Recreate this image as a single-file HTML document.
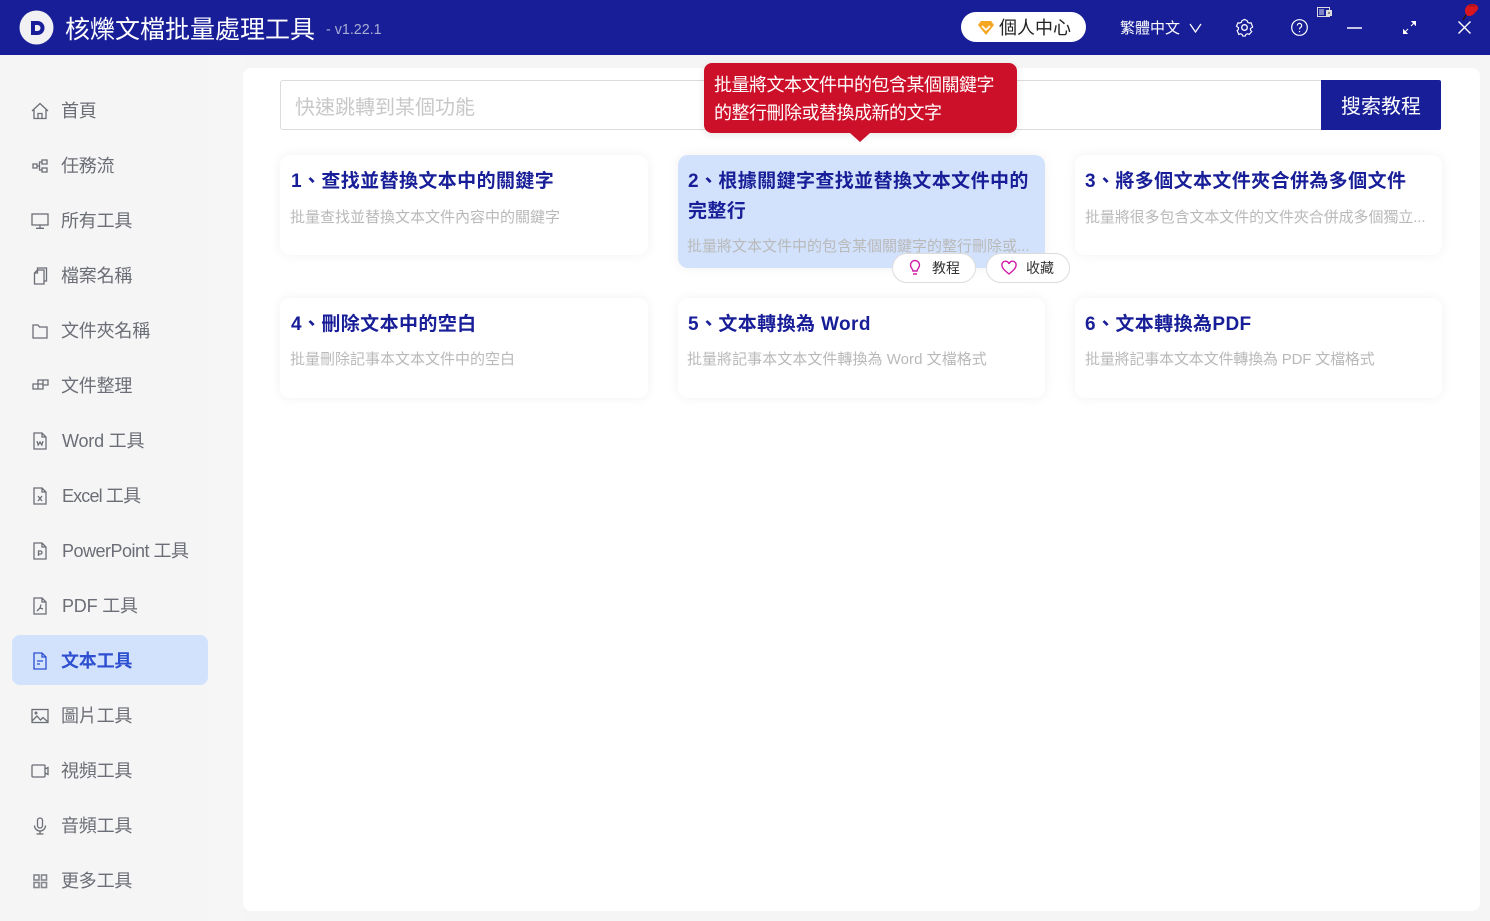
<!DOCTYPE html>
<html lang="zh-Hant"><head><meta charset="utf-8"><title>核爍文檔批量處理工具</title>
<style>
*{box-sizing:border-box;margin:0;padding:0}
html,body{width:1490px;height:921px;overflow:hidden;background:#f5f5f5;font-family:"Liberation Sans","Noto Sans CJK TC",sans-serif}
.a{position:absolute;white-space:nowrap}
#top{left:0;top:0;width:1490px;height:55px;background:#181e97}
.nav{position:absolute;left:61px;font-size:18px;line-height:24px;color:#6b6e76;white-space:nowrap;letter-spacing:-.2px}
.ic{position:absolute;left:30px;width:20px;height:20px;fill:none;stroke:#6b6e76;stroke-width:1.3}
.card{position:absolute;width:368px;height:100px;background:#fff;border-radius:10px;box-shadow:0 0 12px rgba(0,0,0,.06)}
.t{position:absolute;left:11px;top:12px;width:350px;font-size:19px;letter-spacing:.4px;line-height:30px;font-weight:700;color:#181e97}
.d{position:absolute;left:10px;top:51px;width:346px;font-size:15px;line-height:24px;color:#b9b9b9;white-space:nowrap;overflow:hidden}
.pill{position:absolute;top:253px;width:84px;height:30px;background:#fff;border:1px solid #dcdcdc;border-radius:15px;font-size:14px;line-height:29px;color:#333}
.pill span{position:absolute;left:39px}
.pill svg{position:absolute;left:13px;top:5px;width:18px;height:18px;fill:none;stroke:#d01aa8;stroke-width:1.4}
</style></head><body>
<div id="top" class="a"></div>
<svg class="a" style="left:19px;top:10px;width:35px;height:35px" viewBox="0 0 35 35"><circle cx="17.5" cy="17.5" r="17" fill="#f1f1f4"/><path d="M12 11h6.500a7 7 0 0 1 0 14H12z" fill="#181e97"/><path d="M16 15h2.500a3 3 0 0 1 0 6H16z" fill="#f1f1f4"/></svg>
<div class="a" style="left:65px;top:12px;font-size:25px;line-height:36px;color:#fff">核爍文檔批量處理工具</div>
<div class="a" style="left:326px;top:20px;font-size:14.3px;line-height:20px;color:#a9add6">- v1.22.1</div>
<div class="a" style="left:961px;top:12px;width:125px;height:30px;background:#fff;border-radius:15px"></div>
<svg class="a" style="left:977px;top:20px;width:18px;height:16px" viewBox="0 0 18 16"><path d="M4 1h10l3 4-8 10L1 5z" fill="#f5a623"/><path d="M5 6l4 4 4-4" stroke="#fff" stroke-width="1.6" fill="none"/></svg>
<div class="a" style="left:999px;top:15px;font-size:18px;line-height:26px;color:#222">個人中心</div>
<div class="a" style="left:1120px;top:18px;font-size:15px;line-height:22px;color:#fff">繁體中文</div>
<svg class="a" style="left:1188px;top:22px;width:15px;height:12px;fill:none;stroke:#fff;stroke-width:1.3" viewBox="0 0 15 12"><path d="M2 2l5.500 8L13 2"/></svg>
<svg class="a" style="left:1235px;top:18px;width:19px;height:19px;fill:none;stroke:#fff;stroke-width:1.3" viewBox="0 0 19 19"><path d="M6.500 2.500l3-1.500 3 1.500.5 1.800 2 .8 1.800-.3 1.700 4.700-1.500 1-1 .8.200 1.900 1.300 1.300-2.800 3.200-1.800-.8-1.900.800-.7 1.800H7.500l-.7-1.800-1.900-.8-1.800.8L1.300 13.500l1.300-1.300.2-1.900-1-.8L.5 8.500 2.200 4.800 4 5.100l2-.8z" transform="translate(1 .5) scale(.9)"/><circle cx="9.500" cy="9.500" r="2.800"/></svg>
<svg class="a" style="left:1290px;top:18px;width:19px;height:19px;fill:none;stroke:#fff;stroke-width:1.2" viewBox="0 0 19 19"><circle cx="9.500" cy="9.500" r="7.800"/><path d="M7.300 7.500a2.200 2.200 0 1 1 3.400 1.900c-.8.500-1.200 1-1.200 2"/><path d="M9.500 13v1.200"/></svg>
<svg class="a" style="left:1317px;top:7px;width:16px;height:11px" viewBox="0 0 16 11"><rect x=".5" y=".5" width="12" height="9" fill="#181e97" stroke="#ddd"/><rect x="2" y="2" width="5" height="6" fill="#7c80c4"/><rect x="9" y="3" width="6" height="6" fill="#ddd"/><rect x="11" y="5" width="2" height="2" fill="#888"/></svg>
<div class="a" style="left:1347px;top:27px;width:15px;height:2px;background:rgba(255,255,255,.75)"></div>
<svg class="a" style="left:1402px;top:20px;width:15px;height:15px;fill:#fff;stroke:#fff;stroke-width:1" viewBox="0 0 15 15"><path d="M9 6l4-4M2 13l4-4"/><path d="M10 1.500h3.500V5zM1.500 10v3.500H5z"/></svg>
<svg class="a" style="left:1457px;top:20px;width:15px;height:15px;fill:none;stroke:#fff;stroke-width:1.4" viewBox="0 0 15 15"><path d="M1.500 1.500l12 12M13.500 1.500l-12 12"/></svg>
<svg class="a" style="left:1460px;top:2px;width:20px;height:20px" viewBox="0 0 20 20"><path d="M6 13l-3 5" stroke="#301010" stroke-width="1.600"/><path d="M5 9c0-4 3-7 7-7 3 0 6 1 6 4s-3 4-4 6c-2 2-4 2-6 2-2-1-3-3-3-5z" fill="#d7161e"/><path d="M9 4c2-1 4-1 6 0" stroke="#8c1016" fill="none"/></svg>

<div class="a" style="left:207px;top:55px;width:36px;height:866px;background:#f6f6f6"></div>
<div class="a" style="left:12px;top:635px;width:196px;height:50px;background:#d2e2fd;border-radius:8px"></div>

<svg class="ic" style="top:101px" viewBox="0 0 20 20"><path d="M2 10l8-7.500 8 7.500M4 8.500V17.500h12V8.500M8 17.500v-5h4v5"/></svg>
<svg class="ic" style="top:156px" viewBox="0 0 20 20"><rect x="3" y="8" width="4" height="4"/><rect x="12" y="4" width="5" height="4"/><rect x="12" y="12" width="5" height="4"/><path d="M7 10h2.500V6H12M9.500 10v4H12"/></svg>
<svg class="ic" style="top:211px" viewBox="0 0 20 20"><rect x="2" y="3" width="16" height="11"/><path d="M10 14v3M6 17.300h8"/></svg>
<svg class="ic" style="top:266px" viewBox="0 0 20 20"><path d="M4.500 7l3-3h6.500v14H4.500z"/><path d="M7.500 4V2h9v13h-2.500M4.500 7h3V4"/></svg>
<svg class="ic" style="top:321px" viewBox="0 0 20 20"><path d="M3 4h5l1.500 2H17v11H3z"/></svg>
<svg class="ic" style="top:376px" viewBox="0 0 20 20"><path d="M3 8h5v5H3zM8 8h5v5H8zM8 8V4h5v4M13 4h5v5h-5"/></svg>
<svg class="ic" style="top:431px" viewBox="0 0 20 20"><path d="M4 2h8l4 4v12H4zM12 2v4h4"/><path d="M7 10l1.200 4 1.800-3 1.800 3L13 10"/></svg>
<svg class="ic" style="top:486px" viewBox="0 0 20 20"><path d="M4 2h8l4 4v12H4zM12 2v4h4"/><path d="M8 10l4 5M12 10l-4 5"/></svg>
<svg class="ic" style="top:541px" viewBox="0 0 20 20"><path d="M4 2h8l4 4v12H4zM12 2v4h4"/><path d="M8.500 15v-5h2a1.500 1.500 0 0 1 0 3h-2"/></svg>
<svg class="ic" style="top:596px" viewBox="0 0 20 20"><path d="M4 2h8l4 4v12H4zM12 2v4h4"/><path d="M7 15l3-3 1-3.500M10 12l3 1"/></svg>
<svg class="ic" style="top:651px;stroke:#2d4fd0" viewBox="0 0 20 20"><path d="M4 2h8l4 4v12H4zM12 2v4h4"/><path d="M7 10h6M7 13h3"/></svg>
<svg class="ic" style="top:706px" viewBox="0 0 20 20"><rect x="2" y="3.500" width="16" height="13"/><circle cx="6" cy="7" r=".8"/><path d="M2 15l5-5 3.500 4 2.500-2.500 5 4.500"/></svg>
<svg class="ic" style="top:761px" viewBox="0 0 20 20"><rect x="2" y="4" width="13" height="12" rx="1"/><path d="M15 8l3-1.500v7L15 12"/></svg>
<svg class="ic" style="top:816px" viewBox="0 0 20 20"><rect x="7.500" y="2" width="5" height="10" rx="2.500"/><path d="M4.500 9.500a5.500 5.500 0 0 0 11 0M10 15v3M6.500 18h7"/></svg>
<svg class="ic" style="top:871px;stroke:#85878d;stroke-width:1.6" viewBox="0 0 20 20"><rect x="4" y="4" width="5" height="5"/><rect x="11.500" y="4" width="5" height="5"/><rect x="4" y="11.500" width="5" height="5"/><rect x="11.500" y="11.500" width="5" height="5"/></svg>

<div class="nav" style="top:99px">首頁</div>
<div class="nav" style="top:154px">任務流</div>
<div class="nav" style="top:209px">所有工具</div>
<div class="nav" style="top:264px">檔案名稱</div>
<div class="nav" style="top:319px">文件夾名稱</div>
<div class="nav" style="top:374px">文件整理</div>
<div class="nav" style="top:429px;left:62px">Word 工具</div>
<div class="nav" style="top:484px;left:62px;letter-spacing:-.85px">Excel 工具</div>
<div class="nav" style="top:539px;left:62px;letter-spacing:-.5px">PowerPoint 工具</div>
<div class="nav" style="top:594px;left:62px">PDF 工具</div>
<div class="nav" style="top:649px;color:#2d4fd0;font-weight:700">文本工具</div>
<div class="nav" style="top:704px">圖片工具</div>
<div class="nav" style="top:759px">視頻工具</div>
<div class="nav" style="top:814px">音頻工具</div>
<div class="nav" style="top:869px">更多工具</div>

<div class="a" style="left:243px;top:68px;width:1237px;height:843px;background:#fff;border-radius:8px"></div>
<div class="a" style="left:280px;top:80px;width:1042px;height:50px;border:1px solid #dcdcdc;border-radius:3px 0 0 3px"></div>
<div class="a" style="left:295px;top:93px;font-size:20px;line-height:30px;color:#c8c8c8">快速跳轉到某個功能</div>
<div class="a" style="left:1321px;top:80px;width:120px;height:50px;background:#181e97;border-radius:0 2px 2px 0;color:#fff;font-size:20px;line-height:55px;text-align:center">搜索教程</div>

<div class="card" style="left:280px;top:155px"><div class="t">1、查找並替換文本中的關鍵字</div><div class="d">批量查找並替換文本文件內容中的關鍵字</div></div>
<div class="card" style="left:678px;top:155px;width:367px;height:113px;background:#d2e2fc"><div class="t" style="left:10px">2、根據關鍵字查找並替換文本文件中的完整行</div><div class="d" style="left:9px;top:80px;width:350px">批量將文本文件中的包含某個關鍵字的整行刪除或...</div></div>
<div class="card" style="left:1075px;top:155px;width:367px"><div class="t" style="left:10px">3、將多個文本文件夾合併為多個文件</div><div class="d" style="letter-spacing:-.08px">批量將很多包含文本文件的文件夾合併成多個獨立...</div></div>
<div class="card" style="left:280px;top:298px"><div class="t">4、刪除文本中的空白</div><div class="d" style="top:50px">批量刪除記事本文本文件中的空白</div></div>
<div class="card" style="left:678px;top:298px;width:367px"><div class="t" style="left:10px">5、文本轉換為 Word</div><div class="d" style="left:9px;top:50px;letter-spacing:.04px">批量將記事本文本文件轉換為 Word 文檔格式</div></div>
<div class="card" style="left:1075px;top:298px;width:367px"><div class="t" style="left:10px">6、文本轉換為PDF</div><div class="d" style="top:50px;letter-spacing:-.17px">批量將記事本文本文件轉換為 PDF 文檔格式</div></div>

<div class="pill" style="left:892px"><svg viewBox="0 0 18 18"><path d="M7 12c0-2-2.500-3-2.500-6a4.500 4.500 0 0 1 9 0c0 3-2.500 4-2.500 6zM7 15h4"/></svg><span>教程</span></div>
<div class="pill" style="left:986px"><svg viewBox="0 0 18 18"><path d="M9 15C4 11 2 9 2 6.500A3.500 3.500 0 0 1 9 5a3.500 3.500 0 0 1 7 1.500C16 9 14 11 9 15z"/></svg><span>收藏</span></div>

<div class="a" style="left:704px;top:63px;width:313px;height:70px;background:#cd1029;border-radius:8px;box-shadow:0 2px 8px rgba(0,0,0,.1)"></div>
<div class="a" style="left:850px;top:133px;width:0;height:0;border-left:10px solid transparent;border-right:10px solid transparent;border-top:9px solid #cd1029"></div>
<div class="a" style="left:714px;top:71px;font-size:18px;letter-spacing:-.5px;line-height:28px;color:#fff">批量將文本文件中的包含某個關鍵字<br>的整行刪除或替換成新的文字</div>
</body></html>
